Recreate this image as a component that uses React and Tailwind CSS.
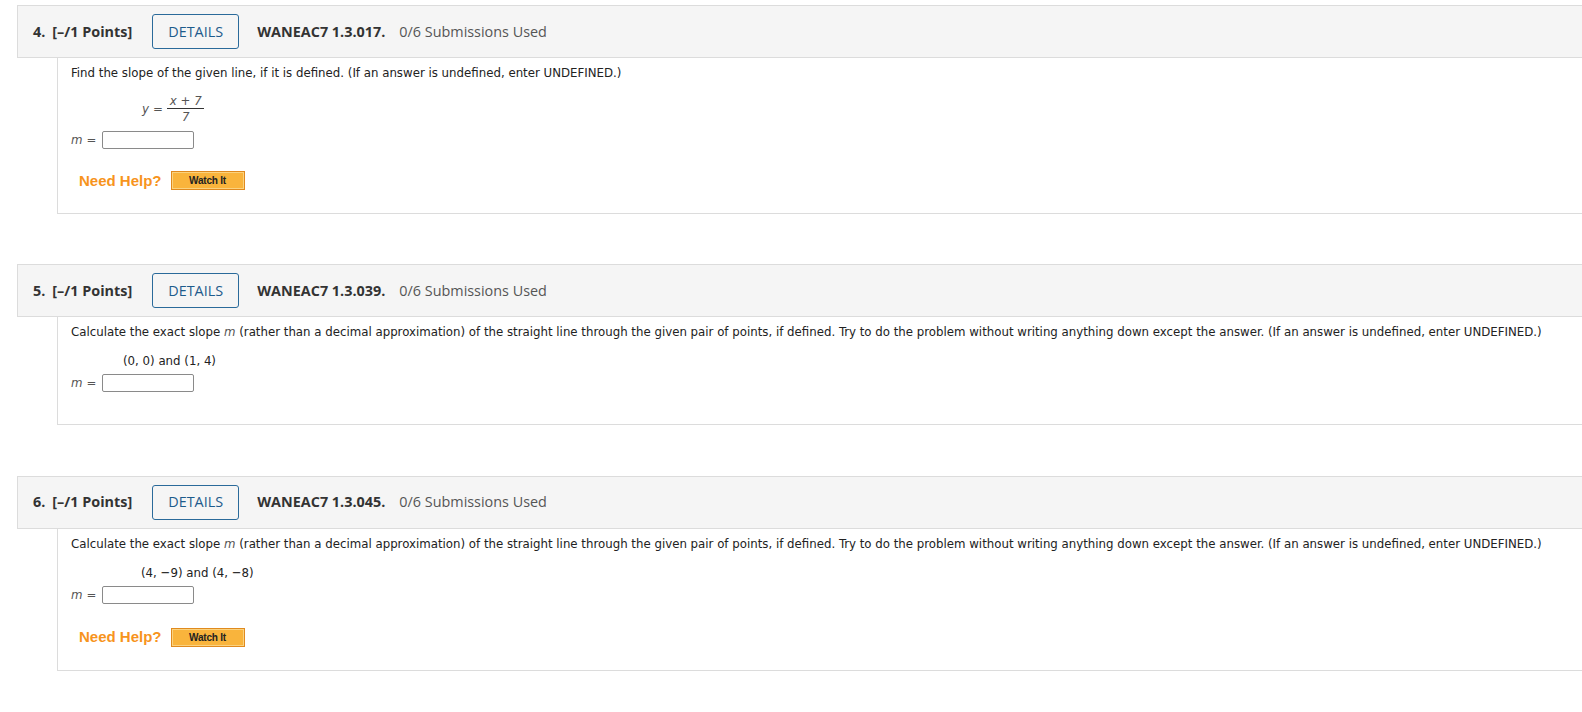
import React from 'react';

const questions = [
    {
        num: '4.',
        code: 'WANEAC7 1.3.017.',
        prompt: 'Find the slope of the given line, if it is defined. (If an answer is undefined, enter UNDEFINED.)',
        kind: 'fraction',
        gap: 'mt-[5px]',
        help: true,
    },
    {
        num: '5.',
        code: 'WANEAC7 1.3.039.',
        prompt: 'Calculate the exact slope m (rather than a decimal approximation) of the straight line through the given pair of points, if defined. Try to do the problem without writing anything down except the answer. (If an answer is undefined, enter UNDEFINED.)',
        kind: 'points',
        points: '(0, 0) and (1, 4)',
        indent: 'ml-[52px]',
        gap: 'mt-[50px]',
        help: false,
    },
    {
        num: '6.',
        code: 'WANEAC7 1.3.045.',
        prompt: 'Calculate the exact slope m (rather than a decimal approximation) of the straight line through the given pair of points, if defined. Try to do the problem without writing anything down except the answer. (If an answer is undefined, enter UNDEFINED.)',
        kind: 'points',
        points: '(4, \u22129) and (4, \u22128)',
        indent: 'ml-[70px]',
        gap: 'mt-[51px]',
        help: true,
    },
];

const bodyFont = "font-['DejaVu_Sans_Condensed','DejaVu_Sans',sans-serif] font-stretch-condensed";

// prompt text, with the "m" set in italics where it shows up as a variable
const Prompt = ({ text }) => {
    const parts = text.split(' slope m ');
    if (parts.length === 1) return <>{text}</>;
    return (
        <>
            {parts[0]} slope <i className="text-[#555]">m</i> {parts[1]}
        </>
    );
};

const WatchIt = () => (
    <div className="h-[19px] w-[74px] border border-[#e08a1e] bg-[#f9b43c] shadow-[inset_0_0_0_1px_#fbd27e] flex items-center justify-center">
        <span className="font-['Liberation_Sans',sans-serif] text-[10px] font-bold text-[#222] tracking-[-0.2px]">Watch It</span>
    </div>
);

const Question = ({ q }) => (
    <div className={q.gap}>
        {/* header bar */}
        <div className="ml-[17px] h-[53px] border-y border-l border-[#dcdcdc] bg-[#f5f5f5] flex items-center pl-[15px] font-['Open_Sans',sans-serif] text-[14.4px]">
            <span className="font-bold text-[#333]">{q.num}</span>
            <span className="ml-[7px] font-bold text-[#333]">[&ndash;/1 Points]</span>
            <div className="ml-[20px] h-[35px] w-[87px] border border-[#2a6a9a] rounded-[3px] flex items-center justify-center text-[#1d5b8c]">
                DETAILS
            </div>
            <span className="ml-[18px] font-bold text-[#333]">{q.code}</span>
            <span className="ml-[14px] text-[#555]">0/6 Submissions Used</span>
        </div>

        {/* body */}
        <div className={`ml-[57px] border-l border-b border-[#dcdcdc] pl-[13px] ${q.help ? 'pb-[21px]' : 'pb-[31px]'} ${bodyFont} text-[13.1px] text-[#222]`}>
            <div className="pt-[7px] h-[23px] leading-[16px] whitespace-nowrap">
                <Prompt text={q.prompt} />
            </div>

            {q.kind === 'fraction' ? (
                <div className="mt-[11px] ml-[71px] flex items-center h-[34px]">
                    <span className="italic text-[#555]">y</span>
                    <span className="ml-[4px] text-[#555]">=</span>
                    <div className="ml-[4px] flex flex-col items-center">
                        <span className="leading-[15px] px-[3px] text-[#555]"><i>x</i> + <i>7</i></span>
                        <span className="h-px w-[37px] bg-[#333]" />
                        <span className="leading-[16px] italic text-[#555]">7</span>
                    </div>
                </div>
            ) : (
                <div className={`mt-[13px] ${q.indent} h-[16px] leading-[16px]`}>{q.points}</div>
            )}

            <div className="mt-[4px] flex items-center">
                <span className="italic text-[#555]">m</span>
                <span className="ml-[4px] text-[#555]">=</span>
                <div className="ml-[6px] h-[18px] w-[92px] border border-[#8a8a8a] rounded-[2px] bg-white" />
            </div>

            {q.help && (
                <div className={`${q.kind === 'points' ? 'mt-[22px]' : 'mt-[20px]'} ml-[8px] flex items-center`}>
                    <span className="font-['Liberation_Sans',sans-serif] text-[15px] font-bold text-[#f7941d]">Need Help?</span>
                    <div className="ml-[9px]">
                        <WatchIt />
                    </div>
                </div>
            )}
        </div>
    </div>
);

const App = () => (
    <div className="min-h-screen w-full bg-white overflow-hidden">
        {questions.map((q) => (
            <Question key={q.num} q={q} />
        ))}
    </div>
);

export default App;
